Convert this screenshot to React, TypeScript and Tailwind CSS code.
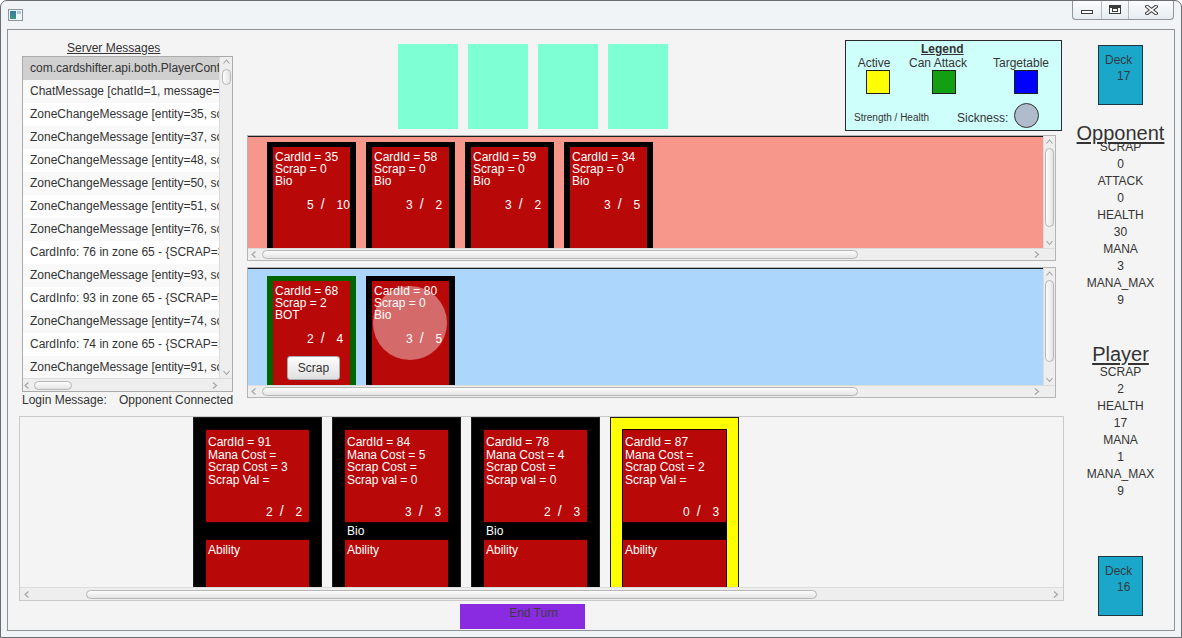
import type { ReactNode } from 'react';

const MESSAGES = [
  'com.cardshifter.api.both.PlayerConfigMessage [gameId=1]',
  'ChatMessage [chatId=1, message=Attempting to join game]',
  'ZoneChangeMessage [entity=35, sourceZone=64, destinationZone=66]',
  'ZoneChangeMessage [entity=37, sourceZone=64, destinationZone=66]',
  'ZoneChangeMessage [entity=48, sourceZone=64, destinationZone=66]',
  'ZoneChangeMessage [entity=50, sourceZone=64, destinationZone=66]',
  'ZoneChangeMessage [entity=51, sourceZone=64, destinationZone=66]',
  'ZoneChangeMessage [entity=76, sourceZone=64, destinationZone=65]',
  'CardInfo: 76 in zone 65 - {SCRAP=3, HEALTH=2}',
  'ZoneChangeMessage [entity=93, sourceZone=64, destinationZone=65]',
  'CardInfo: 93 in zone 65 - {SCRAP=1, HEALTH=3}',
  'ZoneChangeMessage [entity=74, sourceZone=64, destinationZone=65]',
  'CardInfo: 74 in zone 65 - {SCRAP=1, HEALTH=1}',
  'ZoneChangeMessage [entity=91, sourceZone=64, destinationZone=65]',
];

const OPPONENT_STATS = [
  ['SCRAP', '0'],
  ['ATTACK', '0'],
  ['HEALTH', '30'],
  ['MANA', '3'],
  ['MANA_MAX', '9'],
];

const PLAYER_STATS = [
  ['SCRAP', '2'],
  ['HEALTH', '17'],
  ['MANA', '1'],
  ['MANA_MAX', '9'],
];

const HAND = [
  { id: 91, mana: '', scrap: '3', val: 'Scrap Val = ', atk: 2, hp: 2, kind: '', active: false },
  { id: 84, mana: '5', scrap: '', val: 'Scrap val = 0', atk: 3, hp: 3, kind: 'Bio', active: false },
  { id: 78, mana: '4', scrap: '', val: 'Scrap val = 0', atk: 2, hp: 3, kind: 'Bio', active: false },
  { id: 87, mana: '', scrap: '2', val: 'Scrap Val = ', atk: 0, hp: 3, kind: '', active: true },
];

function Chevron({ dir }: { dir: 'up' | 'down' | 'left' | 'right' }) {
  const horiz = dir === 'left' || dir === 'right';
  const pts = {
    up: '0.5,4.5 3.5,1 6.5,4.5',
    down: '0.5,1 3.5,4.5 6.5,1',
    left: '4.5,0.5 1,3.5 4.5,6.5',
    right: '1,0.5 4.5,3.5 1,6.5',
  }[dir];
  return (
    <svg width={horiz ? 6 : 7} height={horiz ? 7 : 6} viewBox={horiz ? '0 0 6 7' : '0 0 7 6'}>
      <polyline points={pts} fill="none" stroke="#a2a2a2" strokeWidth="1.1" />
    </svg>
  );
}

function HScroll({ thumb, left, right }: { thumb: string; left: string; right: string }) {
  return (
    <div className="flex h-full flex-1 items-center border-t border-[#dcdcdc] bg-[#eeeeee]">
      <div className={`flex justify-center ${left}`}>
        <Chevron dir="left" />
      </div>
      <div className="flex flex-1 items-center">
        <div className={`h-[9px] rounded-[5px] border border-[#b6b6b6] bg-linear-to-b from-[#fdfdfd] to-[#e4e4e4] ${thumb}`} />
      </div>
      <div className={`flex justify-center ${right}`}>
        <Chevron dir="right" />
      </div>
    </div>
  );
}

function VScroll({ thumb, width, edge }: { thumb: string; width: string; edge: string }) {
  return (
    <div className={`flex h-full flex-col items-center border-l border-[#dcdcdc] bg-[#eeeeee] ${width}`}>
      <div className={`flex items-center ${edge}`}>
        <Chevron dir="up" />
      </div>
      <div className="flex flex-1 flex-col items-center">
        <div className={`w-[9px] rounded-[5px] border border-[#b6b6b6] bg-linear-to-r from-[#fdfdfd] to-[#e4e4e4] ${thumb}`} />
      </div>
      <div className={`flex items-center ${edge}`}>
        <Chevron dir="down" />
      </div>
    </div>
  );
}

function TitleBar() {
  return (
    <div className="flex h-[28px] items-start">
      <svg className="ml-[7px] mt-[8px]" width="15" height="12" viewBox="0 0 15 12">
        <defs>
          <linearGradient id="ico" x1="0" y1="0" x2="0" y2="1">
            <stop offset="0" stopColor="#3c78a8" />
            <stop offset="1" stopColor="#3f9a7a" />
          </linearGradient>
        </defs>
        <rect x="0.5" y="0.5" width="14" height="11" fill="#f3f5f7" stroke="#8c939a" />
        <rect x="2" y="2" width="6" height="8" fill="url(#ico)" />
        <rect x="9" y="2" width="4" height="3" fill="#a8c9e2" />
      </svg>
      <div className="ml-auto mr-[7px] flex h-[19px] rounded-b-[4px] border border-t-0 border-[#8f959b] bg-linear-to-b from-[#fbfcfd] to-[#e6ecf1]">
        <div className="flex w-[28px] items-center justify-center pt-[4px]">
          <svg width="13" height="5" viewBox="0 0 13 5">
            <rect x="0.5" y="0.5" width="11" height="3" fill="#ffffff" stroke="#3c3c3c" />
          </svg>
        </div>
        <div className="flex w-[27px] items-center justify-center border-l border-[#b5bbc1]">
          <svg width="12" height="10" viewBox="0 0 12 10">
            <rect x="0.5" y="0.5" width="11" height="8" fill="#ffffff" stroke="#3c3c3c" />
            <rect x="1" y="1" width="10" height="2" fill="#3c3c3c" />
            <rect x="3.5" y="3.5" width="5" height="3" fill="#ffffff" stroke="#3c3c3c" />
          </svg>
        </div>
        <div className="flex w-[45px] items-center justify-center border-l border-[#b5bbc1]">
          <svg width="13" height="10" viewBox="0 0 13 10">
            <path d="M2 1.5 L11 8.5 M11 1.5 L2 8.5" stroke="#3c3c3c" strokeWidth="3.6" strokeLinecap="square" />
            <path d="M2 1.5 L11 8.5 M11 1.5 L2 8.5" stroke="#ffffff" strokeWidth="1.6" strokeLinecap="square" />
          </svg>
        </div>
      </div>
    </div>
  );
}

function ServerMessages() {
  return (
    <div className="ml-[14px] flex w-[211px] flex-col">
      <div className="h-[26px] pl-[45px] pt-[11px] leading-[14px]">
        <span className="underline">Server Messages</span>
      </div>
      <div className="flex h-[336px] flex-col border border-[#ababab] bg-white">
        <div className="flex h-[321px]">
          <div className="flex-1 overflow-hidden">
            {MESSAGES.map((m, i) => (
              <div
                key={i}
                className={`h-[23px] whitespace-nowrap pl-[7px] leading-[23px] ${
                  i === 0 ? 'bg-[#d0d0d0]' : i % 2 === 1 ? 'bg-[#f9f9f9]' : 'bg-white'
                }`}
              >
                {m}
              </div>
            ))}
          </div>
          <VScroll width="w-[13px]" edge="h-[10px]" thumb="mt-[2px] h-[16px]" />
        </div>
        <div className="flex h-[13px]">
          <HScroll left="w-[8px]" right="w-[9px]" thumb="ml-[3px] w-[38px]" />
          <div className="w-[13px] border-t border-[#dcdcdc] bg-[#eeeeee]" />
        </div>
      </div>
      <div className="flex whitespace-nowrap leading-[16px]">
        <span className="w-[97px] shrink-0">Login Message:</span>
        <span>Opponent Connected</span>
      </div>
    </div>
  );
}

function Legend() {
  return (
    <div className="ml-[177px] mt-[10px] h-[91px] w-[217px] border border-[#2a2a2a] bg-[#cffffb]">
      <div className="mt-[1px] pl-[75px] font-bold leading-[14px] underline">Legend</div>
      <div className="flex leading-[14px]">
        <span className="ml-[8px] w-[40px] text-center">Active</span>
        <span className="ml-[12px] w-[64px] text-center">Can Attack</span>
        <span className="ml-[19px] w-[64px] text-center">Targetable</span>
      </div>
      <div className="flex">
        <div className="ml-[20px] h-[24px] w-[24px] border border-[#1e1e1e] bg-[#ffff00]" />
        <div className="ml-[42px] h-[24px] w-[24px] border border-[#1e1e1e] bg-[#12a012]" />
        <div className="ml-[58px] h-[24px] w-[24px] border border-[#1e1e1e] bg-[#0000ff]" />
      </div>
      <div className="mt-[9px] flex h-[25px] items-center">
        <span className="ml-[8px] w-[103px] pt-[3px] text-[10px]">Strength / Health</span>
        <span className="w-[57px] pt-[4px]">Sickness:</span>
        <div className="h-[25px] w-[25px] rounded-full border border-[#333333] bg-[#b0bccb]" />
      </div>
    </div>
  );
}

function FieldCard({
  id,
  scrap,
  kind,
  atk,
  hp,
  frame,
  children,
}: {
  id: number;
  scrap: number;
  kind: string;
  atk: number;
  hp: number;
  frame: string;
  children?: ReactNode;
}) {
  return (
    <div className={`relative h-[130px] w-[89px] shrink-0 px-[6px] pt-[5px] ${frame}`}>
      <div className="h-full bg-[#b80808] pl-[2px] pt-[4px] leading-[12px] text-white">
        <div>CardId = {id}</div>
        <div>Scrap = {scrap}</div>
        <div>{kind}</div>
        <div className="mt-[11px] flex h-[12px] items-baseline">
          <span className="ml-[32px]">{atk}</span>
          <span className="ml-[7px] text-[14px] leading-[12px]">/</span>
          <span className="ml-[12px]">{hp}</span>
        </div>
        {children}
      </div>
    </div>
  );
}

function Battlefield({
  outer,
  inner,
  view,
  thumb,
  children,
}: {
  outer: string;
  inner: string;
  view: string;
  thumb: string;
  children: ReactNode;
}) {
  return (
    <div className={`flex w-[809px] flex-col border border-[#b4b4b4] ${outer}`}>
      <div className={`flex ${inner}`}>
        <div className={`flex flex-1 gap-[10px] overflow-hidden border-t border-[#1c1c1c] pl-[19px] ${view}`}>
          {children}
        </div>
        <VScroll width="w-[12px]" edge="h-[11px]" thumb={thumb} />
      </div>
      <div className="flex h-[12px]">
        <HScroll left="w-[12px]" right="w-[12px]" thumb="ml-[2px] w-[596px]" />
        <div className="w-[12px] border-t border-[#dcdcdc] bg-[#eeeeee]" />
      </div>
    </div>
  );
}

function Center() {
  return (
    <div className="ml-[14px] flex w-[815px] flex-col">
      <div className="flex h-[105px] items-start">
        <div className="ml-[151px] mt-[14px] flex gap-[10px]">
          {[0, 1, 2, 3].map((i) => (
            <div key={i} className="h-[85px] w-[60px] bg-[#7fffd4]" />
          ))}
        </div>
        <Legend />
      </div>
      <Battlefield outer="h-[126px]" inner="h-[112px]" view="bg-[#f7968a] pt-[5px]" thumb="mt-[1px] h-[79px]">
        <FieldCard id={35} scrap={0} kind="Bio" atk={5} hp={10} frame="bg-black" />
        <FieldCard id={58} scrap={0} kind="Bio" atk={3} hp={2} frame="bg-black" />
        <FieldCard id={59} scrap={0} kind="Bio" atk={3} hp={2} frame="bg-black" />
        <FieldCard id={34} scrap={0} kind="Bio" atk={3} hp={5} frame="bg-black" />
      </Battlefield>
      <Battlefield outer="mt-[6px] h-[131px]" inner="h-[117px]" view="bg-[#add6fc] pt-[7px]" thumb="mt-[1px] h-[82px]">
        <FieldCard id={68} scrap={2} kind="BOT" atk={2} hp={4} frame="bg-[#006400]">
          <button className="ml-[12px] mt-[12px] h-[24px] w-[53px] rounded-[3px] border border-[#a9a9a9] bg-linear-to-b from-[#fdfdfd] to-[#e0e0e0] text-[12px] leading-[20px] text-[#333333]">
            Scrap
          </button>
        </FieldCard>
        <FieldCard id={80} scrap={0} kind="Bio" atk={3} hp={5} frame="bg-black">
          <div className="absolute left-[7px] top-[10px] h-[74px] w-[74px] rounded-full bg-white/40" />
        </FieldCard>
      </Battlefield>
    </div>
  );
}

function HandCard({ card }: { card: (typeof HAND)[number] }) {
  return (
    <div
      className={`h-[200px] w-[129px] shrink-0 border border-[#202020] p-[11px] ${
        card.active ? 'bg-[#ffff00]' : 'bg-black'
      }`}
    >
      <div className="h-[94px] border border-[#1a0000] bg-[#b80808] text-white">
        <div className="pl-[2px] pt-[6px] leading-[12.7px]">
          <div>CardId = {card.id}</div>
          <div>Mana Cost = {card.mana}</div>
          <div>Scrap Cost = {card.scrap}</div>
          <div>{card.val}</div>
        </div>
        <div className="mt-[18px] flex h-[13px] items-baseline leading-[13px]">
          <span className="ml-[60px]">{card.atk}</span>
          <span className="ml-[7px] text-[14px] leading-[13px]">/</span>
          <span className="ml-[12px]">{card.hp}</span>
        </div>
      </div>
      <div className="h-[16px] bg-black pl-[3px] leading-[16px] text-white">{card.kind}</div>
      <div className="h-[80px] border border-[#1a0000] bg-[#b80808] pl-[2px] pt-[4px] leading-[12.7px] text-white">
        Ability
      </div>
    </div>
  );
}

function Deck({ count, className }: { count: number; className: string }) {
  return (
    <div className={`h-[60px] w-[45px] border border-[#1d3640] bg-[#1ba7ca] pt-[6px] leading-[16px] text-[#2f3b40] ${className}`}>
      <div className="pl-[6px]">Deck</div>
      <div className="pl-[18px]">{count}</div>
    </div>
  );
}

export default function App() {
  return (
    <div className="flex h-[638px] w-[1182px] flex-col overflow-hidden rounded-t-[7px] border border-[#6a6e72] bg-[#f0f4f6] font-['Liberation_Sans',Arial,sans-serif] text-[12px] text-[#333333]">
      <TitleBar />
      <div className="mx-[6px] flex h-[602px] border border-[#8e9296] bg-[#f4f4f4]">
        <main className="flex w-[1056px] flex-col">
          <div className="flex h-[386px]">
            <ServerMessages />
            <Center />
          </div>
          <div className="ml-[11px] flex h-[185px] w-[1045px] flex-col border border-[#c9c9c9]">
            <div className="flex h-[170px] gap-[10px] overflow-hidden pl-[173px]">
              {HAND.map((c) => (
                <HandCard key={c.id} card={c} />
              ))}
            </div>
            <div className="flex h-[13px]">
              <HScroll left="w-[14px]" right="w-[14px]" thumb="ml-[52px] w-[731px]" />
            </div>
          </div>
          <button className="ml-[452px] mt-[3px] h-[25px] w-[125px] bg-[#8a2be2] pb-[6px] pl-[22px] text-center text-[12px] leading-[17px] text-[#3d3d3d]">
            End Turn
          </button>
        </main>
        <aside className="flex w-[110px] flex-col">
          <Deck count={17} className="ml-[34px] mt-[15px]" />
          <div className="pl-[3px] text-center">
            <div className="mt-[23px] h-[11px] text-[20px] leading-[11px] underline underline-offset-[2px]">Opponent</div>
            {OPPONENT_STATS.map(([k, v]) => (
              <div key={k}>
                <div className="h-[17px] leading-[17px]">{k}</div>
                <div className="h-[17px] leading-[17px]">{v}</div>
              </div>
            ))}
            <div className="mt-[35px] h-[20px] text-[20px] leading-[20px] underline underline-offset-[2px]">Player</div>
            {PLAYER_STATS.map(([k, v]) => (
              <div key={k}>
                <div className="h-[17px] leading-[17px]">{k}</div>
                <div className="h-[17px] leading-[17px]">{v}</div>
              </div>
            ))}
          </div>
          <Deck count={16} className="mb-[14px] ml-[34px] mt-auto" />
        </aside>
      </div>
    </div>
  );
}
